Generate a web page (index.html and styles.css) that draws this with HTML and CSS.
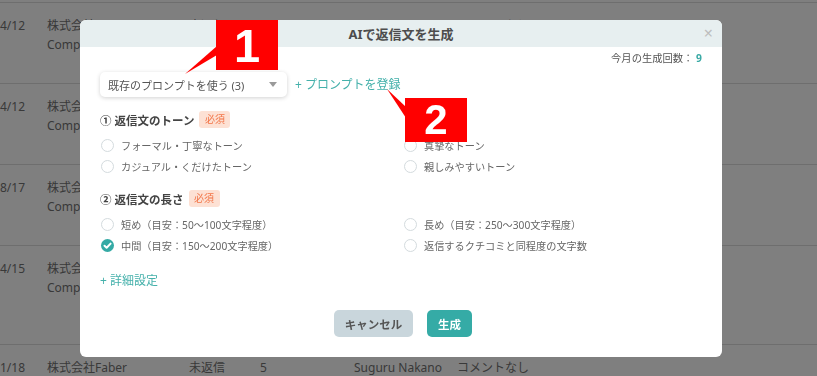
FILE: index.html
```html
<!DOCTYPE html>
<html lang="ja">
  <head>
    <meta charset="UTF-8" />
    <meta name="viewport" content="width=device-width, initial-scale=1.0" />
    <title>AIで返信文を生成</title>
    <link rel="stylesheet" href="styles.css">
  </head>
  <body>
    <div class="page">
      <div class="list">
        <div class="row">
          <span class="c-date">4/12</span>
          <span class="c-company">株式会社Faber<br />Company</span>
          <span class="c-status">未返信</span>
          <span class="c-score">4</span>
          <span class="c-name">Suguru Nakano</span>
          <span class="c-comment">コメントなし</span>
        </div>
        <div class="row">
          <span class="c-date">4/12</span>
          <span class="c-company">株式会社Faber<br />Company</span>
          <span class="c-status">未返信</span>
          <span class="c-score">5</span>
          <span class="c-name">Suguru Nakano</span>
          <span class="c-comment">コメントなし</span>
        </div>
        <div class="row">
          <span class="c-date">8/17</span>
          <span class="c-company">株式会社Faber<br />Company</span>
          <span class="c-status">未返信</span>
          <span class="c-score">3</span>
          <span class="c-name">Suguru Nakano</span>
          <span class="c-comment">コメントなし</span>
        </div>
        <div class="row tall">
          <span class="c-date">4/15</span>
          <span class="c-company">株式会社Faber<br />Company</span>
          <span class="c-status">未返信</span>
          <span class="c-score">4</span>
          <span class="c-name">Suguru Nakano</span>
          <span class="c-comment">コメントなし</span>
        </div>
        <div class="row last">
          <span class="c-date">1/18</span>
          <span class="c-company">株式会社Faber</span>
          <span class="c-status">未返信</span>
          <span class="c-score">5</span>
          <span class="c-name">Suguru Nakano</span>
          <span class="c-comment">コメントなし</span>
        </div>
      </div>
    </div>

    <div class="overlay"></div>

    <div class="modal">
      <div class="modal-head">
        <h2>AIで返信文を生成</h2>
        <span class="close">×</span>
      </div>
      <div class="modal-body">
        <div class="count">今月の生成回数： <b>9</b></div>

        <div class="prompt-row">
          <div class="select">
            <span>既存のプロンプトを使う (3)</span>
            <span class="caret"></span>
          </div>
          <a href="#" class="link"><span class="plus">+</span>プロンプトを登録</a>
        </div>

        <div class="section">
          <div class="sec-title">① 返信文のトーン<span class="badge">必須</span></div>
          <div class="options">
            <label class="opt"><span class="radio"></span>フォーマル・丁寧なトーン</label>
            <label class="opt"><span class="radio"></span>真摯なトーン</label>
            <label class="opt"><span class="radio"></span>カジュアル・くだけたトーン</label>
            <label class="opt"><span class="radio"></span>親しみやすいトーン</label>
          </div>
        </div>

        <div class="section second">
          <div class="sec-title">② 返信文の長さ<span class="badge">必須</span></div>
          <div class="options">
            <label class="opt"><span class="radio"></span>短め（目安：50〜100文字程度）</label>
            <label class="opt"><span class="radio"></span>長め（目安：250〜300文字程度）</label>
            <label class="opt">
              <span class="radio checked">
                <svg width="13" height="13" viewBox="0 0 13 13">
                  <path d="M3.5 6.8 L5.6 8.8 L9.6 4.6" fill="none" stroke="#fff" stroke-width="2" stroke-linecap="round" stroke-linejoin="round" />
                </svg>
              </span>中間（目安：150〜200文字程度）
            </label>
            <label class="opt"><span class="radio"></span>返信するクチコミと同程度の文字数</label>
          </div>
        </div>

        <a href="#" class="link more"><span class="plus">+</span>詳細設定</a>

        <div class="actions">
          <button class="btn cancel">キャンセル</button>
          <button class="btn primary">生成</button>
        </div>
      </div>
    </div>

    <!-- annotation callouts -->
    <div class="callout c1">1</div>
    <div class="callout c2">2</div>
    <svg class="pointers" width="817" height="376" viewBox="0 0 817 376">
      <polygon points="185,74 217,46 217,55" fill="#ff0000" />
      <polygon points="387,89 406,107 406,118" fill="#ff0000" />
    </svg>
  </body>
</html>
```

FILE: styles.css
```css
html,
body {
  height: 376px;
  overflow: hidden;
}
body {
  margin: 0;
  font-family: "Noto Sans", "Noto Sans CJK JP", sans-serif;
  background: #fff;
}
.page {
  height: 376px;
  box-sizing: border-box;
  overflow: hidden;
  padding-top: 2px;
  color: #727272;
  font-size: 12px;
}
.row {
  display: flex;
  height: 81px;
  box-sizing: border-box;
  border-top: 1px solid #dcdcdc;
  padding-top: 13px;
  line-height: 19px;
}
.row.tall {
  height: 99px;
}
.row.last {
  height: 33px;
}
.c-date {
  width: 47px;
}
.c-company {
  width: 142px;
}
.c-status {
  width: 71px;
}
.c-score {
  width: 94px;
}
.c-name {
  width: 103px;
}
.overlay {
  position: fixed;
  inset: 0;
  background: rgba(0, 0, 0, 0.5);
}
.modal {
  position: absolute;
  left: 80px;
  top: 20px;
  width: 642px;
  background: #fff;
  border-radius: 6px;
  overflow: hidden;
  color: #555;
}
.modal-head {
  position: relative;
  height: 27px;
  background: #e7eff0;
  display: flex;
  align-items: center;
  justify-content: center;
}
.modal-head h2 {
  margin: 0;
  font-size: 13px;
  font-weight: bold;
  color: #4d4d4d;
}
.close {
  position: absolute;
  right: 9px;
  top: 4px;
  font-size: 16px;
  line-height: 18px;
  color: #bdbdbd;
}
.modal-body {
  padding: 4px 20px 20px;
}
.count {
  text-align: right;
  font-size: 10.3px;
  line-height: 14px;
  color: #555;
}
.count b {
  color: #3aaaa5;
}
.prompt-row {
  display: flex;
  align-items: center;
  gap: 8px;
  margin-top: 7px;
}
.select {
  width: 187px;
  height: 25px;
  box-sizing: border-box;
  display: flex;
  align-items: center;
  justify-content: space-between;
  padding: 0 10px 0 8px;
  border-radius: 5px;
  box-shadow: 0 1px 4px rgba(0, 0, 0, 0.18);
  font-size: 11px;
  color: #555;
}
.caret {
  width: 0;
  height: 0;
  border-left: 4px solid transparent;
  border-right: 4px solid transparent;
  border-top: 5px solid #9a9a9a;
}
.link {
  color: #45b1ab;
  text-decoration: none;
  font-size: 12px;
  line-height: 16px;
}
.plus {
  margin-right: 3px;
}
.section {
  margin-top: 14px;
}
.section.second {
  margin-top: 13px;
}
.sec-title {
  display: flex;
  align-items: center;
  height: 17px;
  font-size: 11.5px;
  font-weight: bold;
  color: #444;
}
.badge {
  margin-left: 5px;
  padding: 0 5.5px;
  height: 17px;
  line-height: 17px;
  border-radius: 3px;
  background: #fde1d4;
  color: #f27548;
  font-size: 10px;
  font-weight: normal;
}
.options {
  display: grid;
  grid-template-columns: 303px 1fr;
  margin-top: 7px;
}
.opt {
  display: flex;
  align-items: center;
  gap: 7px;
  height: 21px;
  padding-left: 1px;
  font-size: 10.2px;
  color: #666;
}
.radio {
  width: 13px;
  height: 13px;
  box-sizing: border-box;
  border: 1px solid #d4dbde;
  border-radius: 50%;
  background: #fff;
}
.radio.checked {
  border: none;
  background: #35aaa5;
}
.radio svg {
  display: block;
}
.more {
  display: block;
  margin-top: 17px;
  width: max-content;
}
.actions {
  display: flex;
  justify-content: center;
  gap: 14px;
  margin-top: 21px;
  padding-left: 4px;
}
.btn {
  height: 27px;
  border: none;
  border-radius: 5px;
  font-family: inherit;
  font-size: 11.5px;
  font-weight: bold;
  cursor: pointer;
}
.btn.cancel {
  width: 79px;
  background: #c9d6dc;
  color: #555;
}
.btn.primary {
  width: 45px;
  background: #35aba6;
  color: #fff;
}
.callout {
  position: absolute;
  background: #ff0000;
  color: #fff;
  font-family: "Liberation Sans", Arial, sans-serif;
  font-weight: bold;
  display: flex;
  align-items: center;
  justify-content: center;
}
.c1 {
  left: 216px;
  top: 20px;
  width: 62px;
  height: 50px;
  font-size: 47px;
}
.c2 {
  left: 405px;
  top: 98px;
  width: 62px;
  height: 44px;
  font-size: 42px;
}
.pointers {
  position: absolute;
  left: 0;
  top: 0;
  pointer-events: none;
}
```
